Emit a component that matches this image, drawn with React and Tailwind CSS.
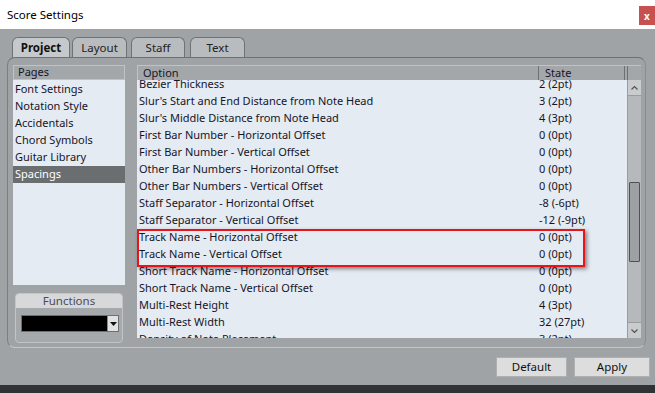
import React from "react";

const rows = [
  ["Bezier Thickness", "2 (2pt)"],
  ["Slur's Start and End Distance from Note Head", "3 (2pt)"],
  ["Slur's Middle Distance from Note Head", "4 (3pt)"],
  ["First Bar Number - Horizontal Offset", "0 (0pt)"],
  ["First Bar Number - Vertical Offset", "0 (0pt)"],
  ["Other Bar Numbers - Horizontal Offset", "0 (0pt)"],
  ["Other Bar Numbers - Vertical Offset", "0 (0pt)"],
  ["Staff Separator - Horizontal Offset", "-8 (-6pt)"],
  ["Staff Separator - Vertical Offset", "-12 (-9pt)"],
  ["Track Name - Horizontal Offset", "0 (0pt)"],
  ["Track Name - Vertical Offset", "0 (0pt)"],
  ["Short Track Name - Horizontal Offset", "0 (0pt)"],
  ["Short Track Name - Vertical Offset", "0 (0pt)"],
  ["Multi-Rest Height", "4 (3pt)"],
  ["Multi-Rest Width", "32 (27pt)"],
  ["Density of Note Placement", "3 (2pt)"],
];

const pages = ["Font Settings", "Notation Style", "Accidentals", "Chord Symbols", "Guitar Library", "Spacings"];

export default function App() {
  return (
    <div
      className="relative w-[655px] h-[393px] flex flex-col bg-[#a0a3a6] text-[11px] text-[#151528] overflow-hidden"
      style={{ fontFamily: '"Segoe UI", "Noto Sans", sans-serif' }}
    >
      {/* Title bar */}
      <div className="h-[29px] bg-white flex items-start justify-between shrink-0">
        <div className="pl-[7px] pt-[6px] text-[11.5px] text-black">Score Settings</div>
        <div className="mt-[6px] w-[16px] h-[19px] bg-[#c75050] text-white font-bold text-[10px] leading-none flex items-center justify-center">
          x
        </div>
      </div>

      {/* Body */}
      <div className="flex-1 flex flex-col">
        {/* Tabs */}
        <div className="h-[28px] pt-[8px] pl-[12px] flex items-end shrink-0">
          <div className="w-[58px] h-[21px] -mb-px rounded-t-[6px] border border-b-0 border-[#6f7275] bg-[#c6c9cb] flex items-center justify-center font-bold text-[11.5px] text-[#111]">
            Project
          </div>
          <div className="ml-[2px] w-[55px] h-[20px] rounded-t-[6px] border border-b-0 border-[#6f7275] bg-[#b9bcbe] flex items-center justify-center text-[11.5px] text-[#222]">
            Layout
          </div>
          <div className="ml-[4px] w-[54px] h-[20px] rounded-t-[6px] border border-b-0 border-[#6f7275] bg-[#b9bcbe] flex items-center justify-center text-[11.5px] text-[#222]">
            Staff
          </div>
          <div className="ml-[5px] w-[55px] h-[20px] rounded-t-[6px] border border-b-0 border-[#6f7275] bg-[#b9bcbe] flex items-center justify-center text-[11.5px] text-[#222]">
            Text
          </div>
        </div>

        {/* Panel */}
        <div className="ml-[7px] mr-[9px] h-[291px] rounded-[8px] border border-t-[#6e7174] border-l-[#7c7f82] border-r-[#8a8d90] border-b-[#c4c6c8] flex pt-[7px] pl-[5px] shrink-0">
          {/* Left column */}
          <div className="w-[112px] flex flex-col">
            <div className="h-[15px] bg-[#a4a7aa] border border-[#c0c3c5] flex items-center pl-[4px] text-[#151528]">
              Pages
            </div>
            <div className="h-[205px] bg-[#e5ebf2] flex flex-col pt-[1px]">
              {pages.map((p) => (
                <div
                  key={p}
                  className={
                    "h-[17px] flex items-center pl-[2px] " +
                    (p === "Spacings" ? "bg-[#6b6e71] text-white" : "")
                  }
                >
                  {p}
                </div>
              ))}
            </div>
            <div className="mt-[8px] ml-[2px] w-[108px] h-[50px] rounded-[4px] border border-[#c2c4c6] bg-[#a6a9ac] flex flex-col">
              <div className="h-[14px] bg-[#d7d8d9] rounded-t-[3px] flex items-center justify-center text-[11.5px] text-[#4a4a5e]">
                Functions
              </div>
              <div className="mt-[7px] ml-[5px] w-[98px] h-[17px] border border-[#6d6f72] bg-black flex justify-end">
                <div className="w-[11px] h-full bg-[#e2e2e2] border-l border-[#888] flex items-center justify-center">
                  <svg width="7" height="4" viewBox="0 0 7 4">
                    <path d="M0 0 H7 L3.5 4 Z" fill="#111" />
                  </svg>
                </div>
              </div>
            </div>
          </div>

          {/* Table */}
          <div className="ml-[12px] w-[504px] flex flex-col">
            <div className="h-[15px] flex bg-[#a4a7aa] border-t border-[#c0c3c5]">
              <div className="w-[401px] pl-[5px] flex items-center border-l border-[#c0c3c5]">Option</div>
              <div className="w-[87px] pl-[6px] flex items-center border-l border-r border-l-[#6e7174] border-r-[#6e7174]">
                State
              </div>
              <div className="w-[3px] border-r border-[#6e7174]" />
              <div className="flex-1" />
            </div>
            <div className="h-[258px] flex">
              <div className="w-[490px] h-full bg-[#e5ebf2] overflow-hidden">
                <div className="-mt-[4px] flex flex-col">
                  {rows.map(([o, s]) => (
                    <div key={o} className="h-[17px] flex items-center shrink-0">
                      <div className="w-[400px] pl-[2px] whitespace-nowrap">{o}</div>
                      <div className="pl-[2px] whitespace-nowrap">{s}</div>
                    </div>
                  ))}
                </div>
              </div>
              {/* Scrollbar */}
              <div className="w-[14px] h-full flex flex-col bg-[#b6b9bb] border-l border-[#9a9da0]">
                <div className="h-[16px] bg-[#c9cccd] border-b border-[#9a9da0] flex items-center justify-center">
                  <svg width="7" height="4" viewBox="0 0 7 4">
                    <path d="M0.5 3.5 L3.5 0.5 L6.5 3.5" fill="none" stroke="#555" strokeWidth="1.2" />
                  </svg>
                </div>
                <div className="flex-1 flex flex-col">
                  <div className="h-[86px]" />
                  <div className="h-[80px] mx-[1px] bg-[#9ea1a4] border border-[#4f5255] rounded-[1px]" />
                </div>
                <div className="h-[16px] bg-[#c9cccd] border-t border-[#9a9da0] flex items-center justify-center">
                  <svg width="7" height="4" viewBox="0 0 7 4">
                    <path d="M0.5 0.5 L3.5 3.5 L6.5 0.5" fill="none" stroke="#555" strokeWidth="1.2" />
                  </svg>
                </div>
              </div>
            </div>
          </div>
        </div>

        {/* Buttons */}
        <div className="mt-[9px] flex justify-end pr-[5px] gap-[7px]">
          <div className="w-[71px] h-[20px] bg-[#dddddd] border border-[#b0b0b0] flex items-center justify-center text-[11.5px] text-[#111]">
            Default
          </div>
          <div className="w-[76px] h-[20px] bg-[#dddddd] border border-[#b0b0b0] flex items-center justify-center text-[11.5px] text-[#111]">
            Apply
          </div>
        </div>
      </div>

      {/* Bottom bar */}
      <div className="h-[8px] bg-[#2f3336] shrink-0" />

      {/* Red highlight annotation */}
      <div className="absolute left-[137px] top-[229px] w-[448px] h-[38px] border-2 border-[#e8141a] shadow-[2px_2px_4px_rgba(0,0,0,0.45)]" />
    </div>
  );
}
